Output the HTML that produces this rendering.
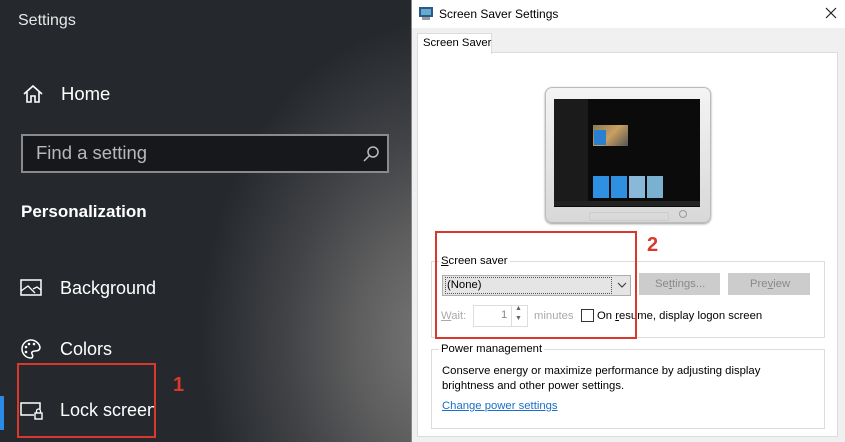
<!DOCTYPE html>
<html><head><meta charset="utf-8">
<style>
*{margin:0;padding:0;box-sizing:border-box}
body{width:845px;height:442px;overflow:hidden;position:relative;font-family:"Liberation Sans",sans-serif;background:#fff}
#left{position:absolute;left:0;top:0;width:411px;height:442px;background:
radial-gradient(ellipse 240px 320px at 440px 340px,#787878 0%,#5e5e5e 35%,#404246 65%,rgba(37,40,44,0) 100%),#25282c;color:#fff}
.t{position:absolute;white-space:nowrap}
#right{position:absolute;left:411px;top:0;width:434px;height:442px;background:#f0f0f0;border-left:1px solid #888}
.red{position:absolute;border:2px solid #d9382c}
.num{position:absolute;color:#d9382c;font-weight:bold;font-size:20px}
.s{font-size:11.3px;color:#000;position:absolute;white-space:nowrap}
</style></head><body>
<div id="left">
 <div class="t" style="left:18px;top:12px;font-size:16px;color:#e8e8e8">Settings</div>
 <svg style="position:absolute;left:22px;top:84px" width="22" height="20" viewBox="0 0 22 20"><path d="M2 10 L11 2 L20 10 M5 8 V18 H9 V12 H13 V18 H17 V8" fill="none" stroke="#fff" stroke-width="1.6"/></svg>
 <div class="t" style="left:61px;top:83px;font-size:18.5px">Home</div>
 <div style="position:absolute;left:21px;top:134px;width:368px;height:39px;border:2px solid #8a8a8a;background:#16181b"></div>
 <div class="t" style="left:36px;top:142px;font-size:18.5px;color:#b8b8b8">Find a setting</div>
 <svg style="position:absolute;left:362px;top:145px" width="18" height="18" viewBox="0 0 18 18"><circle cx="11" cy="7" r="5" fill="none" stroke="#bbb" stroke-width="1.5"/><path d="M7.5 10.5 L2 16" stroke="#bbb" stroke-width="1.5"/></svg>
 <div class="t" style="left:21px;top:202px;font-size:17px;font-weight:bold">Personalization</div>
 <svg style="position:absolute;left:20px;top:278px" width="22" height="20" viewBox="0 0 22 20"><rect x="1" y="2" width="20" height="15" fill="none" stroke="#fff" stroke-width="1.5"/><path d="M1 13 L8 8 L15 15 M13 11 L17 9 L21 12" fill="none" stroke="#fff" stroke-width="1.3"/></svg>
 <div class="t" style="left:60px;top:278px;font-size:18px">Background</div>
 <svg style="position:absolute;left:20px;top:338px" width="22" height="22" viewBox="0 0 22 22"><path d="M11 2 A9 9 0 1 0 11 20 C13 20 13 17 12 16 C11 14 13 13 15 13 C19 13 20 11 20 9 C19 5 15 2 11 2Z" fill="none" stroke="#fff" stroke-width="1.5"/><circle cx="6" cy="9" r="1.3" fill="#fff"/><circle cx="9" cy="6" r="1.3" fill="#fff"/><circle cx="14" cy="6" r="1.3" fill="#fff"/><circle cx="6" cy="14" r="1.3" fill="#fff"/></svg>
 <div class="t" style="left:60px;top:339px;font-size:18px">Colors</div>
 <div style="position:absolute;left:0;top:396px;width:4px;height:34px;background:#2b8ae6"></div>
 <svg style="position:absolute;left:20px;top:401px" width="24" height="20" viewBox="0 0 24 20"><path d="M14 14 H1 V2 H20 V8" fill="none" stroke="#fff" stroke-width="1.5"/><rect x="15" y="12" width="7" height="6" fill="none" stroke="#fff" stroke-width="1.4"/><path d="M16.5 12 V10 A2 2 0 0 1 20.5 10 V12" fill="none" stroke="#fff" stroke-width="1.3"/></svg>
 <div class="t" style="left:60px;top:400px;font-size:18px">Lock screen</div>
 <div class="red" style="left:17px;top:363px;width:139px;height:75px"></div>
 <div class="num" style="left:173px;top:374px">1</div>
</div>
<div id="right">
 <div style="position:absolute;left:0;top:0;width:434px;height:28px;background:#fff"></div>
 <svg style="position:absolute;left:6px;top:6px" width="16" height="15" viewBox="0 0 16 15"><rect x="1" y="1" width="14" height="10" fill="#2a5a8a"/><rect x="3" y="3" width="10" height="6" fill="#6ac"/><rect x="4" y="11" width="8" height="3" fill="#999"/></svg>
 <div class="s" style="left:27px;top:7px;font-size:12px">Screen Saver Settings</div>
 <svg style="position:absolute;left:413px;top:7px" width="12" height="12" viewBox="0 0 12 12"><path d="M1 1 L11 11 M11 1 L1 11" stroke="#222" stroke-width="1.2"/></svg>
 <div style="position:absolute;left:5px;top:52px;width:421px;height:385px;background:#fff;border:1px solid #dcdcdc"></div>
 <div style="position:absolute;left:5px;top:33px;width:75px;height:21px;background:#fff;border:1px solid #dcdcdc;border-bottom:none"></div>
 <div class="s" style="left:11px;top:37px">Screen Saver</div>
 <!-- monitor -->
 <div style="position:absolute;left:133px;top:87px;width:166px;height:136px;border-radius:7px;background:linear-gradient(#f4f4f4,#d8d8d8);border:1px solid #bbb;box-shadow:0 1px 2px #999"></div>
 <div style="position:absolute;left:142px;top:99px;width:146px;height:108px;background:#0b0b0b"></div>
 <div style="position:absolute;left:142px;top:99px;width:34px;height:104px;background:#1b1b1b"></div>
 <div style="position:absolute;left:181px;top:125px;width:35px;height:21px;background:linear-gradient(135deg,#8a7a5a,#c9a060,#555)"></div>
 <div style="position:absolute;left:182px;top:130px;width:12px;height:15px;background:#2a7fd0"></div>
 <div style="position:absolute;left:181px;top:176px;width:16px;height:22px;background:#2f8fe0"></div>
 <div style="position:absolute;left:199px;top:176px;width:16px;height:22px;background:#2f8fe0"></div>
 <div style="position:absolute;left:217px;top:176px;width:16px;height:22px;background:#8ab8d8"></div>
 <div style="position:absolute;left:235px;top:176px;width:16px;height:22px;background:#7ab0d0"></div>
 <div style="position:absolute;left:142px;top:201px;width:146px;height:5px;background:#222"></div>
 <div style="position:absolute;left:177px;top:212px;width:80px;height:9px;border:1px solid #ccc;border-radius:2px"></div>
 <div style="position:absolute;left:267px;top:210px;width:8px;height:8px;border:1.5px solid #999;border-radius:50%"></div>
 <!-- screen saver group -->
 <div style="position:absolute;left:19px;top:261px;width:394px;height:77px;border:1px solid #dcdcdc"></div>
 <div class="s" style="left:27px;top:255px;background:#fff;padding:0 2px"><u>S</u>creen saver</div>
 <div style="position:absolute;left:30px;top:275px;width:189px;height:21px;background:#e5e5e5;border:1px solid #adadad"></div>
 <div style="position:absolute;left:33px;top:277px;width:167px;height:17px;border:1px dotted #555"></div>
 <div class="s" style="left:35px;top:279px">(None)</div>
 <svg style="position:absolute;left:205px;top:282px" width="10" height="7" viewBox="0 0 10 7"><path d="M1 1 L5 5 L9 1" fill="none" stroke="#444" stroke-width="1.2"/></svg>
 <div style="position:absolute;left:227px;top:273px;width:81px;height:22px;background:#ccc"></div>
 <div class="s" style="left:243px;top:278px;color:#8a8a8a">Se<u>t</u>tings...</div>
 <div style="position:absolute;left:316px;top:273px;width:82px;height:22px;background:#ccc"></div>
 <div class="s" style="left:338px;top:278px;color:#8a8a8a">Pre<u>v</u>iew</div>
 <div class="s" style="left:29px;top:310px;color:#aaa"><u>W</u>ait:</div>
 <div style="position:absolute;left:61px;top:305px;width:55px;height:22px;border:1px solid #ddd"></div>
 <div class="s" style="left:89px;top:309px;color:#888">1</div>
 <div style="position:absolute;left:99px;top:306px;width:16px;height:20px;border-left:1px solid #ddd"></div>
 <div class="s" style="left:103px;top:305px;font-size:7px;color:#666">▲</div>
 <div class="s" style="left:103px;top:315px;font-size:7px;color:#666">▼</div>
 <div class="s" style="left:122px;top:310px;color:#aaa">minutes</div>
 <div style="position:absolute;left:169px;top:309px;width:13px;height:13px;border:1px solid #333;background:#fff"></div>
 <div class="s" style="left:185px;top:310px">On <u>r</u>esume, display logon screen</div>
 <div class="red" style="left:23px;top:231px;width:202px;height:108px"></div>
 <div class="num" style="left:235px;top:234px">2</div>
 <!-- power -->
 <div style="position:absolute;left:19px;top:349px;width:394px;height:80px;border:1px solid #dcdcdc"></div>
 <div class="s" style="left:27px;top:343px;background:#fff;padding:0 2px">Power management</div>
 <div class="s" style="left:30px;top:364px;line-height:15px">Conserve energy or maximize performance by adjusting display<br>brightness and other power settings.</div>
 <div class="s" style="left:30px;top:400px;color:#1a6fc9;text-decoration:underline">Change power settings</div>
</div>
</body></html>
